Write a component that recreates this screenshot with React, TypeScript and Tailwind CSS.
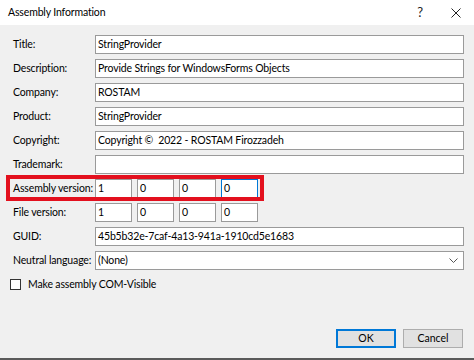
import { FC } from 'react'

const font = { fontFamily: 'Lato, "Noto Sans", sans-serif' }

const Field: FC<{ value?: string; focused?: boolean }> = ({ value, focused }) => (
  <div
    className={`h-[19px] bg-white border flex items-center px-[2px] text-[10.5px] tracking-[-0.15px] text-black leading-none whitespace-pre ${
      focused ? 'border-[#0078d7]' : 'border-[#9a9a9a]'
    }`}
  >
    {value}
  </div>
)

const Row: FC<{ label: string; children: React.ReactNode }> = ({ label, children }) => (
  <div className="flex items-center h-[19px]">
    <div className="w-[82px] shrink-0 text-[10.5px] tracking-[-0.15px] text-black leading-none whitespace-nowrap">
      {label}
    </div>
    <div className="flex-1">{children}</div>
  </div>
)

const Version: FC<{ values: string[]; focusLast?: boolean }> = ({ values, focusLast }) => (
  <div className="flex gap-[5px]">
    {values.map((v, i) => (
      <div key={i} className="w-[37px]">
        <Field value={v} focused={focusLast && i === values.length - 1} />
      </div>
    ))}
  </div>
)

export default function App() {
  return (
    <div className="w-[474px] h-[360px] bg-[#f0f0f0] flex flex-col overflow-hidden" style={font}>
      {/* title bar */}
      <div className="h-[25px] bg-white flex items-center pl-[8px] text-[10.5px] tracking-[-0.15px] text-black shrink-0">
        <span className="flex-1">Assembly Information</span>
        <span className="w-[36px] text-center text-[13px] text-[#222]">?</span>
        <span className="w-[36px] flex justify-center">
          <svg width="10" height="10" viewBox="0 0 10 10">
            <path d="M0.5 0.5 L9.5 9.5 M9.5 0.5 L0.5 9.5" stroke="#222" strokeWidth="1" />
          </svg>
        </span>
      </div>

      <div className="flex flex-col pl-[13px] pr-[10px] pt-[10px] gap-[5px]">
        <Row label="Title:"><Field value="StringProvider" /></Row>
        <Row label="Description:"><Field value="Provide Strings for WindowsForms Objects" /></Row>
        <Row label="Company:"><Field value="ROSTAM" /></Row>
        <Row label="Product:"><Field value="StringProvider" /></Row>
        <Row label="Copyright:"><Field value="Copyright ©  2022 - ROSTAM Firozzadeh" /></Row>
        <Row label="Trademark:"><Field value="" /></Row>
        <div className="relative">
          <Row label="Assembly version:"><Version values={['1', '0', '0', '0']} focusLast /></Row>
          {/* red annotation frame */}
          <div className="absolute left-[-7px] top-[-4px] w-[258px] h-[26px] border-[4px] border-[#e3101e] pointer-events-none" />
        </div>
        <Row label="File version:"><Version values={['1', '0', '0', '0']} /></Row>
        <Row label="GUID:"><Field value="45b5b32e-7caf-4a13-941a-1910cd5e1683" /></Row>
        <Row label="Neutral language:">
          <div className="h-[19px] bg-white border border-[#9a9a9a] flex items-center px-[2px] text-[10.5px] tracking-[-0.15px] text-black leading-none">
            <span className="flex-1">(None)</span>
            <svg width="9" height="6" viewBox="0 0 9 6" className="mr-[3px]">
              <path d="M0.5 0.5 L4.5 4.5 L8.5 0.5" fill="none" stroke="#555" strokeWidth="1" />
            </svg>
          </div>
        </Row>
        <div className="flex items-center gap-[7px] mt-[4px] -ml-[3px]">
          <div className="w-[11px] h-[11px] border border-[#333] bg-white" />
          <span className="text-[10.5px] tracking-[-0.15px] text-black leading-none">Make assembly COM-Visible</span>
        </div>
      </div>

      <div className="flex justify-end gap-[7px] pr-[11px] mt-[39px]">
        <div className="w-[60px] h-[19px] bg-[#e1e1e1] border-2 border-[#0078d7] flex items-center justify-center text-[10.5px] text-black leading-none">
          OK
        </div>
        <div className="w-[60px] h-[19px] bg-[#e1e1e1] border border-[#adadad] flex items-center justify-center text-[10.5px] text-black leading-none">
          Cancel
        </div>
      </div>
      <div className="flex-1" />
      <div className="h-[2px] bg-[#5a5a5a] shrink-0" />
    </div>
  )
}
